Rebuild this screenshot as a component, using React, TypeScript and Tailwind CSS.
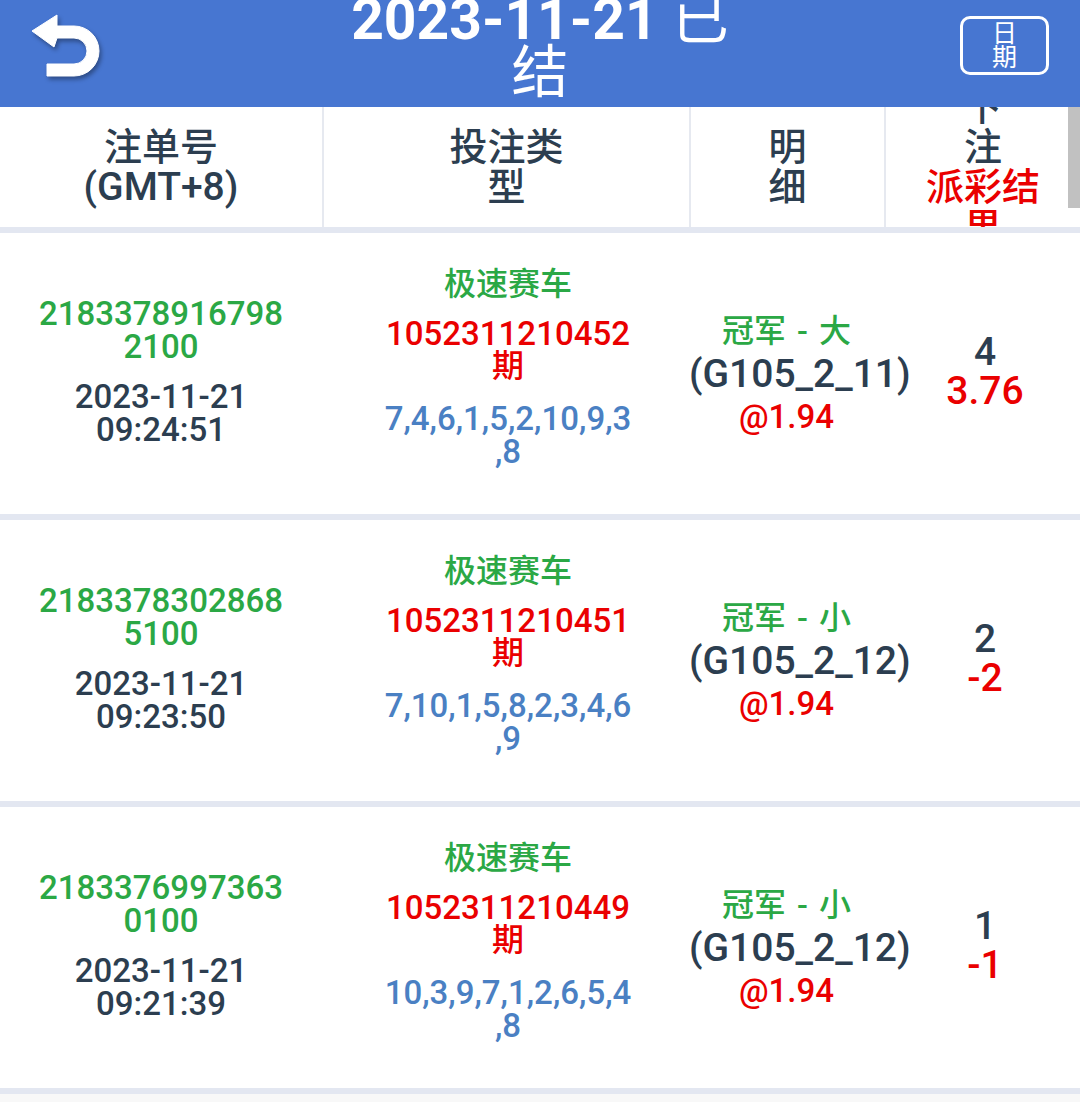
import React from 'react';

type Bet = {
  id: string[];
  time: string[];
  game: string;
  issue: string[];
  nums: string[];
  play: string;
  code: string;
  odds: string;
  amount: string;
  win: string;
};

const bets: Bet[] = [
  {
    id: ['2183378916798', '2100'],
    time: ['2023-11-21', '09:24:51'],
    game: '极速赛车',
    issue: ['1052311210452', '期'],
    nums: ['7,4,6,1,5,2,10,9,3', ',8'],
    play: '冠军 - 大',
    code: '(G105_2_11)',
    odds: '@1.94',
    amount: '4',
    win: '3.76',
  },
  {
    id: ['2183378302868', '5100'],
    time: ['2023-11-21', '09:23:50'],
    game: '极速赛车',
    issue: ['1052311210451', '期'],
    nums: ['7,10,1,5,8,2,3,4,6', ',9'],
    play: '冠军 - 小',
    code: '(G105_2_12)',
    odds: '@1.94',
    amount: '2',
    win: '-2',
  },
  {
    id: ['2183376997363', '0100'],
    time: ['2023-11-21', '09:21:39'],
    game: '极速赛车',
    issue: ['1052311210449', '期'],
    nums: ['10,3,9,7,1,2,6,5,4', ',8'],
    play: '冠军 - 小',
    code: '(G105_2_12)',
    odds: '@1.94',
    amount: '1',
    win: '-1',
  },
];

function BackIcon() {
  return (
    <svg
      width="76"
      height="66"
      viewBox="28 12 76 66"
      className="drop-shadow-[2px_3px_2px_rgba(0,0,0,0.35)]"
    >
      <path
        d="M57 14 L57 25 L74 25 A25 25 0 0 1 74 75 L47 75 L47 63 L74 63 A13 13 0 0 0 74 37 L57 37 L54 46 L32 30 Z"
        fill="#ffffff"
        stroke="#ffffff"
        strokeWidth="1"
        strokeLinejoin="round"
      />
    </svg>
  );
}

function BetRow({ bet }: { bet: Bet }) {
  return (
    <div className="grid grid-cols-[322px_367px_195px_1fr] h-[287px] bg-white border-b-[6px] border-[#e3e7f1]">
      {/* order no + time */}
      <div className="flex flex-col justify-center pb-[4px] text-center">
        <div className="text-[#2ba845] text-[33px] leading-[33px]">
          {bet.id.map((l) => (
            <div key={l}>{l}</div>
          ))}
        </div>
        <div className="mt-[17px] text-[#2c3e50] text-[33px] leading-[33px]">
          {bet.time.map((l) => (
            <div key={l}>{l}</div>
          ))}
        </div>
      </div>

      {/* game / issue / numbers */}
      <div className="flex flex-col justify-center pb-[11px] pl-[5px] text-center">
        <div className="text-[#2ba845] text-[32px] leading-[33px]">{bet.game}</div>
        <div className="mt-[16px] text-[#ea0000] leading-[33px]">
          <div className="text-[33px]">{bet.issue[0]}</div>
          <div className="text-[32px]">{bet.issue[1]}</div>
        </div>
        <div className="mt-[19px] text-[#4a80c3] text-[33px] leading-[33px]">
          {bet.nums.map((l) => (
            <div key={l}>{l}</div>
          ))}
        </div>
      </div>

      {/* detail */}
      <div className="flex flex-col justify-center text-center">
        <div className="text-[#2ba845] text-[32px] leading-[40px] whitespace-nowrap [word-spacing:3px]">{bet.play}</div>
        <div className="text-[#2c3e50] text-[39px] leading-[46px] whitespace-nowrap">{bet.code}</div>
        <div className="text-[#ea0000] text-[33px] leading-[40px] whitespace-nowrap">{bet.odds}</div>
      </div>

      {/* amount / payout */}
      <div className="flex flex-col justify-center pl-[6px] pb-[4px] text-center text-[39px] leading-[39px]">
        <div className="text-[#2c3e50]">{bet.amount}</div>
        <div className="text-[#ea0000]">{bet.win}</div>
      </div>
    </div>
  );
}

export default function App() {
  return (
    <div className="relative min-h-[1102px] bg-[#f8f8f8] font-medium [font-family:Roboto,'Noto_Sans_CJK_SC',sans-serif]">
      {/* Top bar */}
      <header className="grid grid-cols-[1fr_380px_1fr] grid-rows-[91px] items-center h-[107px] pb-[16px] bg-[#4776d1] overflow-hidden text-white">
        <div className="pl-[28px] flex items-center">
          <BackIcon />
        </div>
        <h1 className="text-center text-[57px] leading-[53px] font-bold">
          2023-11-21 <span className="font-normal">已</span>
          <br />
          <span className="font-normal">结</span>
        </h1>
        <div className="flex justify-end pr-[31px]">
          <button className="w-[89px] h-[59px] border-[3px] border-white rounded-[10px] flex items-center justify-center text-[25px] leading-[24px] font-normal text-white">
            日<br />期
          </button>
        </div>
      </header>

      {/* Column headers */}
      <div className="grid grid-cols-[322px_367px_195px_1fr] h-[126px] bg-white border-b-[6px] border-[#e3e7f1] text-[#2c3e50] text-center leading-[40px]">
        <div className="flex flex-col justify-center overflow-hidden">
          <div className="text-[38px]">注单号</div>
          <div className="text-[39px]">(GMT+8)</div>
        </div>
        <div className="flex flex-col justify-center overflow-hidden border-l-2 border-[#e6e9f0] text-[38px]">
          <div>投注类</div>
          <div>型</div>
        </div>
        <div className="flex flex-col justify-center overflow-hidden border-l-2 border-[#e6e9f0] text-[38px]">
          <div>明</div>
          <div>细</div>
        </div>
        <div className="flex flex-col justify-center overflow-hidden border-l-2 border-[#e6e9f0] text-[38px]">
          <div className="shrink-0">下</div>
          <div className="shrink-0">注</div>
          <div className="shrink-0 text-[#ea0000]">派彩结</div>
          <div className="shrink-0 text-[#ea0000]">果</div>
        </div>
      </div>

      {bets.map((bet) => (
        <BetRow key={bet.id.join('')} bet={bet} />
      ))}

      {/* scrollbar thumb */}
      <div className="absolute right-0 top-[107px] w-[12px] h-[101px] bg-[#c1c1c1]" />
    </div>
  );
}
